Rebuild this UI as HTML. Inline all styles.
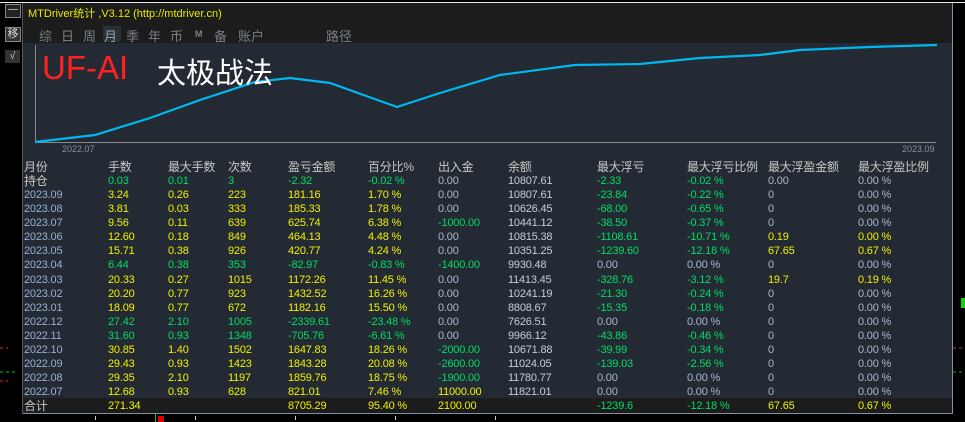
<!DOCTYPE html>
<html><head><meta charset="utf-8"><style>
body{margin:0;width:965px;height:422px;background:#000;position:relative;overflow:hidden;font-family:"Liberation Sans","Noto Sans CJK SC",sans-serif;}
.abs{position:absolute}
#top{left:0;top:2px;width:965px;height:1px;background:#e8e8e8}
#hdr{left:22px;top:3px;width:930px;height:40px;background:#1c1c1c}
#chart{left:22px;top:43px;width:930px;height:355px;background:#242a33}
#tot{left:22px;top:398px;width:930px;height:15px;background:#1c1c1c}
#bb{left:22px;top:413px;width:930px;height:1px;background:#8090a8}
#rb{left:952px;top:3px;width:1px;height:411px;background:#8090a8}
#lb{left:22px;top:3px;width:1px;height:411px;background:#555}
.tab{font-size:13px;color:#7a7f88;top:26px}
table{position:absolute;left:24px;top:160px;border-collapse:collapse;font-size:11px}
td{padding:0;height:14.07px;line-height:14px;white-space:nowrap;letter-spacing:-0.2px}
.h td{color:#c8c8c8;font-size:12px}
.y{color:#f0f000}.g{color:#00dc64}.z{color:#a8b8d0}.w{color:#c8ccd4}.m{color:#9aaed0}
</style></head><body>
<div class="abs" id="top"></div>
<div class="abs" id="hdr"></div>
<div class="abs" id="chart"></div>
<div class="abs" id="tot"></div>
<div class="abs" id="bb"></div>
<div class="abs" id="rb"></div>
<div class="abs" id="lb"></div>
<div class="abs" style="left:5px;top:4px;width:14px;height:12px;border:1px solid #888;background:#222;color:#ddd;font-size:10px;line-height:10px;text-align:center">—</div>
<div class="abs" style="left:5px;top:27px;width:14px;height:13px;border:1px solid #888;background:#333;color:#ddd;font-size:11px;line-height:13px;text-align:center">移</div>
<div class="abs" style="left:5px;top:50px;width:15px;height:13px;background:#333;color:#ccc;font-size:10px;line-height:13px;text-align:center">√</div>
<div class="abs" style="left:28px;top:5px;font-size:11px;color:#e8e800">MTDriver统计 ,V3.12 (http://mtdriver.cn)</div>
<div class="abs" style="left:103px;top:26px;width:18px;height:16px;background:#2a3038"></div>
<div class="abs tab" style="left:39px">综</div>
<div class="abs tab" style="left:61px">日</div>
<div class="abs tab" style="left:83px">周</div>
<div class="abs tab" style="left:104px;color:#9aa0aa">月</div>
<div class="abs tab" style="left:126px">季</div>
<div class="abs tab" style="left:148px">年</div>
<div class="abs tab" style="left:170px">币</div>
<div class="abs tab" style="left:195px;font-size:9px;top:29px;font-weight:bold">M</div>
<div class="abs tab" style="left:214px">备</div>
<div class="abs tab" style="left:238px">账户</div>
<div class="abs tab" style="left:326px">路径</div>
<svg class="abs" style="left:0;top:0" width="965" height="422">
<line x1="35.5" y1="45" x2="35.5" y2="142" stroke="#888"/>
<line x1="35" y1="142.5" x2="936" y2="142.5" stroke="#888"/>
<polyline fill="none" stroke="#00b8f0" stroke-width="2.2" points="35,142 95,135 150,118 200,100 255,82 290,78 330,83 397,107 440,93 500,75 575,65 640,64 700,58 760,55 800,50 870,47 937,45"/>
<line x1="0" y1="348" x2="8" y2="348" stroke="#e02020" stroke-dasharray="3,3"/>
<line x1="0" y1="372" x2="18" y2="372" stroke="#00c000" stroke-dasharray="3,3"/>
<line x1="0" y1="381" x2="8" y2="381" stroke="#e02020" stroke-dasharray="3,3"/>
<line x1="953" y1="348" x2="965" y2="348" stroke="#e02020" stroke-dasharray="3,3"/>
<line x1="953" y1="372" x2="965" y2="372" stroke="#00c000" stroke-dasharray="3,3"/>
<rect x="961" y="298" width="4" height="10" fill="#00e000"/>
<rect x="158" y="416" width="6" height="6" fill="#e00000"/>
<line x1="155.5" y1="414" x2="155.5" y2="422" stroke="#00d000"/>
<line x1="95.5" y1="416" x2="95.5" y2="420" stroke="#ccc"/>
<line x1="195.5" y1="416" x2="195.5" y2="420" stroke="#ccc"/>
<line x1="295.5" y1="416" x2="295.5" y2="420" stroke="#ccc"/>
<line x1="395.5" y1="416" x2="395.5" y2="420" stroke="#ccc"/>
<line x1="495.5" y1="416" x2="495.5" y2="420" stroke="#ccc"/>
</svg>
<div class="abs" style="left:62px;top:144px;font-size:9px;color:#8890a0">2022.07</div>
<div class="abs" style="left:902px;top:144px;font-size:9px;color:#8890a0">2023.09</div>
<div class="abs" style="left:42px;top:49px;font-size:33px;color:#ff2020">UF-AI</div>
<div class="abs" style="left:157px;top:50px;font-size:29px;color:#fff">太极战法</div>
<table>
<colgroup><col style="width:84px"><col style="width:60px"><col style="width:60px"><col style="width:60px"><col style="width:80px"><col style="width:70px"><col style="width:70px"><col style="width:89px"><col style="width:90px"><col style="width:81px"><col style="width:90px"><col style="width:80px"></colgroup>
<tr class="h"><td>月份</td><td>手数</td><td>最大手数</td><td>次数</td><td>盈亏金额</td><td>百分比%</td><td>出入金</td><td>余额</td><td>最大浮亏</td><td>最大浮亏比例</td><td>最大浮盈金额</td><td>最大浮盈比例</td></tr>
<tr><td style="color:#c8c8c8;font-size:12px">持仓</td><td class="g">0.03</td><td class="g">0.01</td><td class="g">3</td><td class="g">-2.32</td><td class="g">-0.02 %</td><td class="z">0.00</td><td class="w">10807.61</td><td class="g">-2.33</td><td class="g">-0.02 %</td><td class="z">0.00</td><td class="z">0.00 %</td></tr>
<tr><td class="m">2023.09</td><td class="y">3.24</td><td class="y">0.26</td><td class="y">223</td><td class="y">181.16</td><td class="y">1.70 %</td><td class="z">0.00</td><td class="w">10807.61</td><td class="g">-23.84</td><td class="g">-0.22 %</td><td class="z">0</td><td class="z">0.00 %</td></tr>
<tr><td class="m">2023.08</td><td class="y">3.81</td><td class="y">0.03</td><td class="y">333</td><td class="y">185.33</td><td class="y">1.78 %</td><td class="z">0.00</td><td class="w">10626.45</td><td class="g">-68.00</td><td class="g">-0.65 %</td><td class="z">0</td><td class="z">0.00 %</td></tr>
<tr><td class="m">2023.07</td><td class="y">9.56</td><td class="y">0.11</td><td class="y">639</td><td class="y">625.74</td><td class="y">6.38 %</td><td class="g">-1000.00</td><td class="w">10441.12</td><td class="g">-38.50</td><td class="g">-0.37 %</td><td class="z">0</td><td class="z">0.00 %</td></tr>
<tr><td class="m">2023.06</td><td class="y">12.60</td><td class="y">0.18</td><td class="y">849</td><td class="y">464.13</td><td class="y">4.48 %</td><td class="z">0.00</td><td class="w">10815.38</td><td class="g">-1108.61</td><td class="g">-10.71 %</td><td class="y">0.19</td><td class="y">0.00 %</td></tr>
<tr><td class="m">2023.05</td><td class="y">15.71</td><td class="y">0.38</td><td class="y">926</td><td class="y">420.77</td><td class="y">4.24 %</td><td class="z">0.00</td><td class="w">10351.25</td><td class="g">-1239.60</td><td class="g">-12.18 %</td><td class="y">67.65</td><td class="y">0.67 %</td></tr>
<tr><td class="m">2023.04</td><td class="g">6.44</td><td class="g">0.38</td><td class="g">353</td><td class="g">-82.97</td><td class="g">-0.83 %</td><td class="g">-1400.00</td><td class="w">9930.48</td><td class="z">0.00</td><td class="z">0.00 %</td><td class="z">0</td><td class="z">0.00 %</td></tr>
<tr><td class="m">2023.03</td><td class="y">20.33</td><td class="y">0.27</td><td class="y">1015</td><td class="y">1172.26</td><td class="y">11.45 %</td><td class="z">0.00</td><td class="w">11413.45</td><td class="g">-328.76</td><td class="g">-3.12 %</td><td class="y">19.7</td><td class="y">0.19 %</td></tr>
<tr><td class="m">2023.02</td><td class="y">20.20</td><td class="y">0.77</td><td class="y">923</td><td class="y">1432.52</td><td class="y">16.26 %</td><td class="z">0.00</td><td class="w">10241.19</td><td class="g">-21.30</td><td class="g">-0.24 %</td><td class="z">0</td><td class="z">0.00 %</td></tr>
<tr><td class="m">2023.01</td><td class="y">18.09</td><td class="y">0.77</td><td class="y">672</td><td class="y">1182.16</td><td class="y">15.50 %</td><td class="z">0.00</td><td class="w">8808.67</td><td class="g">-15.35</td><td class="g">-0.18 %</td><td class="z">0</td><td class="z">0.00 %</td></tr>
<tr><td class="m">2022.12</td><td class="g">27.42</td><td class="g">2.10</td><td class="g">1005</td><td class="g">-2339.61</td><td class="g">-23.48 %</td><td class="z">0.00</td><td class="w">7626.51</td><td class="z">0.00</td><td class="z">0.00 %</td><td class="z">0</td><td class="z">0.00 %</td></tr>
<tr><td class="m">2022.11</td><td class="g">31.60</td><td class="g">0.93</td><td class="g">1348</td><td class="g">-705.76</td><td class="g">-6.61 %</td><td class="z">0.00</td><td class="w">9966.12</td><td class="g">-43.86</td><td class="g">-0.46 %</td><td class="z">0</td><td class="z">0.00 %</td></tr>
<tr><td class="m">2022.10</td><td class="y">30.85</td><td class="y">1.40</td><td class="y">1502</td><td class="y">1647.83</td><td class="y">18.26 %</td><td class="g">-2000.00</td><td class="w">10671.88</td><td class="g">-39.99</td><td class="g">-0.34 %</td><td class="z">0</td><td class="z">0.00 %</td></tr>
<tr><td class="m">2022.09</td><td class="y">29.43</td><td class="y">0.93</td><td class="y">1423</td><td class="y">1843.28</td><td class="y">20.08 %</td><td class="g">-2600.00</td><td class="w">11024.05</td><td class="g">-139.03</td><td class="g">-2.56 %</td><td class="z">0</td><td class="z">0.00 %</td></tr>
<tr><td class="m">2022.08</td><td class="y">29.35</td><td class="y">2.10</td><td class="y">1197</td><td class="y">1859.76</td><td class="y">18.75 %</td><td class="g">-1900.00</td><td class="w">11780.77</td><td class="z">0.00</td><td class="z">0.00 %</td><td class="z">0</td><td class="z">0.00 %</td></tr>
<tr><td class="m">2022.07</td><td class="y">12.68</td><td class="y">0.93</td><td class="y">628</td><td class="y">821.01</td><td class="y">7.46 %</td><td class="y">11000.00</td><td class="w">11821.01</td><td class="z">0.00</td><td class="z">0.00 %</td><td class="z">0</td><td class="z">0.00 %</td></tr>
<tr><td style="color:#c8c8c8;font-size:12px">合计</td><td class="y">271.34</td><td></td><td></td><td class="y">8705.29</td><td class="y">95.40 %</td><td class="y">2100.00</td><td></td><td class="g">-1239.6</td><td class="g">-12.18 %</td><td class="y">67.65</td><td class="y">0.67 %</td></tr>
</table>
</body></html>
